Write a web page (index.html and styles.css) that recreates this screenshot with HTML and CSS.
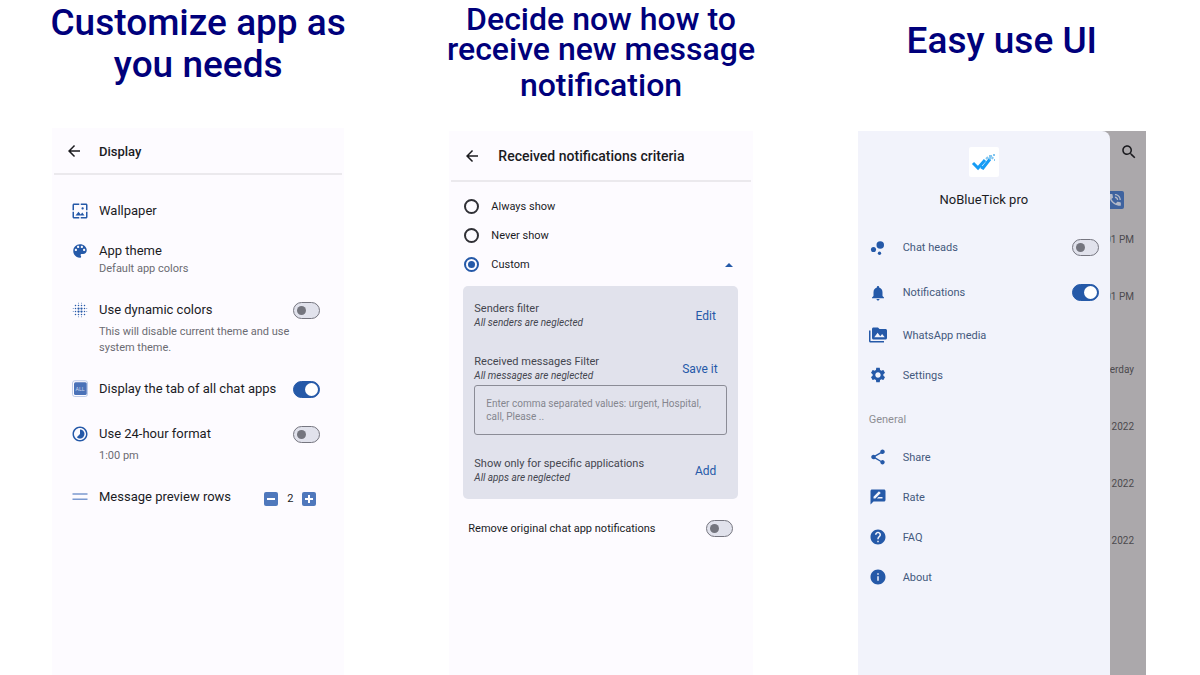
FILE: index.html
```html
<!DOCTYPE html>
<html lang="en">

<head>

<meta charset="utf-8">
<meta name="viewport" content="width=device-width, initial-scale=1">
<title>NoBlueTick pro</title>

<link rel="stylesheet" href="styles.css">

</head>

<body>

<main class="showcase">

   <section class="column">
      <h2 class="headline headline-large">Customize app as<br>you needs</h2>

      <div class="phone">
         <header class="appbar">
            <button class="iconbtn" aria-label="Back">
               <svg class="icon" viewBox="0 0 24 24"><path d="M20 11H7.83l5.59-5.59L12 4l-8 8 8 8 1.41-1.41L7.83 13H20v-2z"/></svg>
            </button>
            <h3 class="apptitle">Display</h3>
         </header>

         <ul class="settings">
            <li class="setting">
               <svg class="icon" viewBox="0 0 24 24"><path d="M4 4h7V2H4c-1.1 0-2 .9-2 2v7h2V4zm6 9l-4 5h12l-3-4-2.03 2.71L10 13zm7-4.5c0-.83-.67-1.5-1.5-1.5S14 7.67 14 8.5s.67 1.5 1.5 1.5S17 9.33 17 8.5zM20 2h-7v2h7v7h2V4c0-1.1-.9-2-2-2zm0 18h-7v2h7c1.1 0 2-.9 2-2v-7h-2v7zM4 13H2v7c0 1.1.9 2 2 2h7v-2H4v-7z"/></svg>
               <span class="name">Wallpaper</span>
            </li>
            <li class="setting">
               <svg class="icon" viewBox="0 0 24 24"><path d="M12 3c-4.97 0-9 4.03-9 9s4.03 9 9 9c.83 0 1.5-.67 1.5-1.5 0-.39-.15-.74-.39-1.01-.23-.26-.38-.61-.38-.99 0-.83.67-1.5 1.5-1.5H16c2.76 0 5-2.24 5-5 0-4.42-4.03-8-9-8zm-5.5 9c-.83 0-1.5-.67-1.5-1.5S5.67 9 6.5 9 8 9.67 8 10.5 7.33 12 6.5 12zm3-4C8.67 8 8 7.33 8 6.5S8.67 5 9.5 5s1.5.67 1.5 1.5S10.33 8 9.5 8zm5 0c-.83 0-1.5-.67-1.5-1.5S13.67 5 14.5 5s1.5.67 1.5 1.5S15.33 8 14.5 8zm3 4c-.83 0-1.5-.67-1.5-1.5S16.67 9 17.5 9s1.5.67 1.5 1.5-.67 1.5-1.5 1.5z"/></svg>
               <span class="name">App theme</span>
               <span class="hint">Default app colors</span>
            </li>
            <li class="setting">
               <svg class="icon" viewBox="0 0 24 24">
                  <g class="dots"><path d="M10 10h0M14 10h0M10 14h0M14 14h0" stroke-width="3"/><path d="M6 10h0M6 14h0M18 10h0M18 14h0M10 6h0M14 6h0M10 18h0M14 18h0M6 6h0M18 6h0M6 18h0M18 18h0" stroke-width="2"/><path d="M10 3h0M14 3h0M10 21h0M14 21h0M3 10h0M3 14h0M21 10h0M21 14h0" stroke-width="1"/></g>
               </svg>
               <label class="name" for="dynamic">Use dynamic colors</label>
               <input class="switch" type="checkbox" id="dynamic">
               <span class="hint spaced">This will disable current theme and use system theme.</span>
            </li>
            <li class="setting loose">
               <svg class="icon" viewBox="0 0 24 24">
                  <rect x="2" y="1" width="20" height="21" rx="3" fill="none" stroke="#a9bce0"/>
                  <rect x="4" y="3" width="17" height="17" rx="2" fill="#4b72b8"/>
                  <text x="12" y="14" text-anchor="middle" class="tiny">ALL</text>
               </svg>
               <label class="name" for="alltab">Display the tab of all chat apps</label>
               <input class="switch" type="checkbox" id="alltab" checked>
            </li>
            <li class="setting">
               <svg class="icon" viewBox="0 0 24 24"><path d="M16.24 7.76C15.07 6.59 13.54 6 12 6v6l-4.24 4.24c2.34 2.34 6.14 2.34 8.49 0 2.34-2.34 2.34-6.14-.01-8.48zM12 2C6.48 2 2 6.48 2 12s4.48 10 10 10 10-4.48 10-10S17.52 2 12 2zm0 18c-4.42 0-8-3.58-8-8s3.58-8 8-8 8 3.58 8 8-3.58 8-8 8z"/></svg>
               <label class="name" for="hours">Use 24-hour format</label>
               <input class="switch" type="checkbox" id="hours">
               <span class="hint spaced">1:00 pm</span>
            </li>
            <li class="setting">
               <svg class="icon" viewBox="0 0 24 24"><path fill="#7b99d0" d="M2 7h20v2H2zM2 14h20v2H2z"/></svg>
               <span class="name">Message preview rows</span>
               <span class="stepper">
                  <button class="step" aria-label="Fewer rows"><svg viewBox="0 0 14 14"><path d="M3 7h8"/></svg></button>
                  <output>2</output>
                  <button class="step" aria-label="More rows"><svg viewBox="0 0 14 14"><path d="M3 7h8M7 3v8"/></svg></button>
               </span>
            </li>
         </ul>
      </div>
   </section>

   <section class="column">
      <h2 class="headline headline-tight">Decide now how to<br>receive new message<span class="lastline">notification</span></h2>

      <div class="phone">
         <header class="appbar appbar-tall">
            <button class="iconbtn" aria-label="Back">
               <svg class="icon" viewBox="0 0 24 24"><path d="M20 11H7.83l5.59-5.59L12 4l-8 8 8 8 1.41-1.41L7.83 13H20v-2z"/></svg>
            </button>
            <h3 class="apptitle">Received notifications criteria</h3>
         </header>

         <div class="choices">
            <label class="choice"><input class="radio" type="radio" name="criteria">Always show</label>
            <label class="choice"><input class="radio" type="radio" name="criteria">Never show</label>
            <label class="choice"><input class="radio" type="radio" name="criteria" checked>Custom
               <svg class="caret" viewBox="0 0 8 4"><path d="M0 4l4-4 4 4z"/></svg>
            </label>
         </div>

         <div class="filters">
            <div class="filter">
               <div>
                  <p class="filtername">Senders filter</p>
                  <p class="state">All senders are neglected</p>
               </div>
               <button class="action">Edit</button>
            </div>
            <div class="filter filter-input">
               <div>
                  <label class="filtername" for="words">Received messages Filter</label>
                  <p class="state">All messages are neglected</p>
               </div>
               <button class="action">Save it</button>
            </div>
            <textarea class="words" id="words" rows="2" placeholder="Enter comma separated values: urgent, Hospital, call, Please .."></textarea>
            <div class="filter">
               <div>
                  <p class="filtername">Show only for specific applications</p>
                  <p class="state">All apps are neglected</p>
               </div>
               <button class="action">Add</button>
            </div>
         </div>

         <div class="remove">
            <label for="remove">Remove original chat app notifications</label>
            <input class="switch" type="checkbox" id="remove">
         </div>
      </div>
   </section>

   <section class="column">
      <h2 class="headline headline-single">Easy use UI</h2>

      <div class="phone phone-drawer">
         <nav class="drawer">
            <svg class="logo" viewBox="0 0 30 30">
               <rect width="30" height="30" rx="2" fill="#fff"/>
               <path d="M4 16l5 5 7-8M12 20l2 1 7-9" fill="none" stroke="#169cf5" stroke-width="3"/>
               <path d="M17 12l2-2M20 12l2-2M20 9h3M23 12l1-2M24 8h2M25 13h1" fill="none" stroke="#82c6f0" stroke-width="2"/>
            </svg>
            <h3 class="product">NoBlueTick pro</h3>

            <div class="item item-switch">
               <svg class="icon" viewBox="0 0 24 24"><circle cx="6" cy="14" r="3.4"/><circle cx="14" cy="19" r="2.2"/><circle cx="15" cy="8" r="5"/></svg>
               <label for="heads">Chat heads</label>
               <input class="switch" type="checkbox" id="heads">
            </div>
            <div class="item item-switch">
               <svg class="icon" viewBox="0 0 24 24"><path d="M12 22c1.1 0 2-.9 2-2h-4c0 1.1.89 2 2 2zm6-6v-5c0-3.07-1.64-5.64-4.5-6.32V4c0-.83-.67-1.5-1.5-1.5s-1.5.67-1.5 1.5v.68C7.63 5.36 6 7.92 6 11v5l-2 2v1h16v-1l-2-2z"/></svg>
               <label for="notify">Notifications</label>
               <input class="switch" type="checkbox" id="notify" checked>
            </div>
            <a class="item" href="#media">
               <svg class="icon" viewBox="0 0 24 24"><path d="M2 6H0v5h.01L0 20c0 1.1.9 2 2 2h18v-2H2V6zm20-2h-8l-2-2H6c-1.1 0-1.99.9-1.99 2L4 16c0 1.1.9 2 2 2h16c1.1 0 2-.9 2-2V6c0-1.1-.9-2-2-2zM7 15l4.5-6 3.5 4.51 2.5-3.01L21 15H7z"/></svg>
               WhatsApp media
            </a>
            <a class="item" href="#settings">
               <svg class="icon" viewBox="0 0 24 24"><path d="M19.14 12.94c.04-.3.06-.61.06-.94 0-.32-.02-.64-.07-.94l2.03-1.58c.18-.14.23-.41.12-.61l-1.92-3.32c-.12-.22-.37-.29-.59-.22l-2.39.96c-.5-.38-1.03-.7-1.62-.94l-.36-2.54c-.04-.24-.24-.41-.48-.41h-3.84c-.24 0-.43.17-.47.41l-.36 2.54c-.59.24-1.13.57-1.62.94l-2.39-.96c-.22-.08-.47 0-.59.22L2.74 8.87c-.12.21-.08.47.12.61l2.03 1.58c-.05.3-.09.63-.09.94s.02.64.07.94l-2.03 1.58c-.18.14-.23.41-.12.61l1.92 3.32c.12.22.37.29.59.22l2.39-.96c.5.38 1.03.7 1.62.94l.36 2.54c.05.24.24.41.48.41h3.84c.24 0 .44-.17.47-.41l.36-2.54c.59-.24 1.13-.56 1.62-.94l2.39.96c.22.08.47 0 .59-.22l1.92-3.32c.12-.22.07-.47-.12-.61l-2.01-1.58zM12 15.6c-1.98 0-3.6-1.62-3.6-3.6s1.62-3.6 3.6-3.6 3.6 1.62 3.6 3.6-1.62 3.6-3.6 3.6z"/></svg>
               Settings
            </a>
            <h4 class="group">General</h4>
            <a class="item" href="#share">
               <svg class="icon" viewBox="0 0 24 24"><path d="M18 16.08c-.76 0-1.44.3-1.96.77L8.91 12.7c.05-.23.09-.46.09-.7s-.04-.47-.09-.7l7.05-4.11c.54.5 1.25.81 2.04.81 1.66 0 3-1.34 3-3s-1.34-3-3-3-3 1.34-3 3c0 .24.04.47.09.7L8.04 9.81C7.5 9.31 6.79 9 6 9c-1.66 0-3 1.34-3 3s1.34 3 3 3c.79 0 1.5-.31 2.04-.81l7.12 4.16c-.05.21-.08.43-.08.65 0 1.61 1.31 2.92 2.92 2.92 1.61 0 2.92-1.31 2.92-2.92s-1.31-2.92-2.92-2.92z"/></svg>
               Share
            </a>
            <a class="item" href="#rate">
               <svg class="icon" viewBox="0 0 24 24"><path d="M20 2H4c-1.1 0-1.99.9-1.99 2L2 22l4-4h14c1.1 0 2-.9 2-2V4c0-1.1-.9-2-2-2zM6 14v-2.47l6.88-6.88c.2-.2.51-.2.71 0l1.77 1.77c.2.2.2.51 0 .71L8.47 14H6zm12 0h-7.5l2-2H18v2z"/></svg>
               Rate
            </a>
            <a class="item" href="#faq">
               <svg class="icon" viewBox="0 0 24 24"><path d="M12 2C6.48 2 2 6.48 2 12s4.48 10 10 10 10-4.48 10-10S17.52 2 12 2zm1 17h-2v-2h2v2zm2.07-7.75l-.9.92C13.45 12.9 13 13.5 13 15h-2v-.5c0-1.1.45-2.1 1.17-2.83l1.24-1.26c.37-.36.59-.86.59-1.41 0-1.1-.9-2-2-2s-2 .9-2 2H8c0-2.21 1.79-4 4-4s4 1.79 4 4c0 .88-.36 1.68-.93 2.25z"/></svg>
               FAQ
            </a>
            <a class="item" href="#about">
               <svg class="icon" viewBox="0 0 24 24"><path d="M12 2C6.48 2 2 6.48 2 12s4.48 10 10 10 10-4.48 10-10S17.52 2 12 2zm1 15h-2v-6h2v6zm0-8h-2V7h2v2z"/></svg>
               About
            </a>
         </nav>

         <div class="behind">
            <button class="iconbtn" aria-label="Search">
               <svg class="icon" viewBox="0 0 24 24"><path d="M15.5 14h-.79l-.28-.27C15.41 12.59 16 11.11 16 9.5 16 5.91 13.09 3 9.5 3S3 5.91 3 9.5 5.91 16 9.5 16c1.61 0 3.09-.59 4.23-1.57l.27.28v.79l5 4.99L20.49 19l-4.99-5zm-6 0C7.01 14 5 11.99 5 9.5S7.01 5 9.5 5 14 7.01 14 9.5 11.99 14 9.5 14z"/></svg>
            </button>
            <svg class="call" viewBox="0 0 18 18">
               <rect width="18" height="18" rx="2" fill="#3f639f"/>
               <path transform="translate(1 1) scale(.66)" fill="#b4b9c8" d="M20 15.5c-1.25 0-2.45-.2-3.57-.57-.35-.11-.74-.03-1.02.24l-2.2 2.2c-2.83-1.44-5.15-3.75-6.59-6.59l2.2-2.21c.28-.26.36-.65.25-1C8.7 6.45 8.5 5.25 8.5 4c0-.55-.45-1-1-1H4c-.55 0-1 .45-1 1 0 9.39 7.61 17 17 17 .55 0 1-.45 1-1v-3.5c0-.55-.45-1-1-1zM19 12h2c0-4.97-4.03-9-9-9v2c3.87 0 7 3.13 7 7zm-4 0h2c0-2.76-2.24-5-5-5v2c1.66 0 3 1.34 3 3z"/>
            </svg>
            <time class="stamp">01 PM</time>
            <time class="stamp">01 PM</time>
            <time class="stamp stamp-older">erday</time>
            <time class="stamp">2022</time>
            <time class="stamp">2022</time>
            <time class="stamp">2022</time>
         </div>
      </div>
   </section>

</main>

</body>

</html>
```
FILE: styles.css
```css
* {
   box-sizing: border-box;
}

body {
   margin: 0px;
   background: white;
   color: #1b1b1f;
   font-family: Roboto, "Liberation Sans", sans-serif;
   font-size: 11px;
}

h2, h3, h4, p, ul {
   margin: 0px;
   padding: 0px;
   font-weight: 400;
}

button {
   margin: 0px;
   padding: 0px;
   border: 0px;
   background: none;
   color: inherit;
   font: inherit;
   cursor: pointer;
}

.showcase {
   display: grid;
   grid-template-columns: 292fr 303fr 288fr;
   gap: 105px;
   min-height: 100vh;
   padding: 0px 54px 0px 52px;
}

.column {
   display: flex;
   flex-direction: column;
   min-width: 0px;
}

/* headlines */

.headline {
   display: flow-root;
   margin: 0px -10px;
   color: #00007b;
   font-weight: 500;
   text-align: center;
   white-space: nowrap;
}

.headline-large {
   height: 128px;
   padding-top: 2px;
   font-size: 37px;
   line-height: 42px;
}

.headline-tight {
   height: 131px;
   padding-top: 4px;
   font-size: 32px;
   line-height: 30px;
}

.lastline {
   display: block;
   margin-top: 6px;
}

.headline-single {
   height: 131px;
   padding-top: 20px;
   font-size: 37px;
   line-height: 42px;
}

/* shared parts */

.phone {
   flex: 1;
   background: #fdfbff;
}

.icon {
   display: block;
   width: 18px;
   height: 18px;
   flex: none;
   fill: #2559a8;
}

.iconbtn .icon {
   fill: #1b1b1f;
}

.appbar {
   display: flex;
   align-items: center;
   gap: 16px;
   height: 47px;
   margin: 0px 2px;
   padding-top: 1px;
   padding-left: 11px;
   border-bottom: 2px solid #ebe9ed;
}

.appbar-tall {
   height: 51px;
   gap: 17px;
   padding-left: 12px;
}

.apptitle {
   font-size: 13px;
   font-weight: 500;
}

.appbar-tall .apptitle {
   font-size: 14px;
}

.switch {
   display: flex;
   align-items: center;
   appearance: none;
   flex: none;
   width: 27px;
   height: 17px;
   margin: 0px;
   padding: 0px 3px;
   border: 1px solid #767680;
   border-radius: 9px;
   background: #e1e2ec;
}

.switch::before {
   content: "";
   width: 9px;
   height: 9px;
   border-radius: 50%;
   background: #74757e;
}

.switch:checked {
   justify-content: flex-end;
   padding: 0px 1px;
   border-color: #2559a8;
   background: #2559a8;
}

.switch:checked::before {
   width: 13px;
   height: 13px;
   background: white;
}

/* display settings */

.settings {
   padding: 26px 24px 0px 19px;
   list-style: none;
}

.setting {
   display: grid;
   grid-template-columns: 18px 1fr auto;
   column-gap: 10px;
   align-items: center;
   margin-bottom: 20px;
}

.setting.loose {
   margin-bottom: 25px;
}

.name {
   font-size: 13px;
   line-height: 20px;
   white-space: nowrap;
}

.hint {
   grid-column: 2 / 4;
   margin-bottom: 3px;
   color: #6b6b72;
   font-size: 11px;
   line-height: 16px;
}

.spaced {
   margin-top: 4px;
   padding-right: 20px;
}

.dots {
   stroke: #2559a8;
   stroke-linecap: round;
}

.tiny {
   fill: #c9d6ee;
   font-size: 7px;
}

.stepper {
   display: flex;
   align-items: center;
   gap: 9px;
   margin-right: 4px;
   padding-top: 3px;
}

.step {
   width: 14px;
   height: 14px;
   border-radius: 2px;
   background: #4f78bc;
}

.step svg {
   display: block;
   stroke: white;
   stroke-width: 2;
}

/* notification criteria */

.choices {
   padding: 10px 20px 0px 15px;
}

.choice {
   display: flex;
   align-items: center;
   gap: 12px;
   height: 29px;
}

.radio {
   display: grid;
   place-items: center;
   appearance: none;
   width: 15px;
   height: 15px;
   margin: 0px;
   border: 2px solid #303036;
   border-radius: 50%;
}

.radio:checked {
   border-color: #2559a8;
}

.radio:checked::before {
   content: "";
   width: 7px;
   height: 7px;
   border-radius: 50%;
   background: #2559a8;
}

.caret {
   width: 8px;
   height: 4px;
   margin-left: auto;
   fill: #2559a8;
}

.filters {
   margin: 7px 15px 0px 14px;
   padding: 16px 11px 14px 11px;
   border-radius: 5px;
   background: #e1e2ec;
   color: #44464f;
}

.filter {
   display: flex;
   justify-content: space-between;
   align-items: center;
   height: 28px;
}

.filter-input {
   margin-top: 25px;
}

.filtername {
   display: block;
   line-height: 14px;
}

.state {
   font-size: 10px;
   font-style: italic;
   line-height: 14px;
}

.action {
   min-width: 24px;
   margin-right: 9px;
   color: #2559a8;
   font-size: 12px;
}

.words {
   display: block;
   width: 100%;
   height: 50px;
   margin: 2px 0px 22px 0px;
   padding: 11px;
   border: 1px solid #8b8c96;
   border-radius: 3px;
   background: none;
   font-family: inherit;
   font-size: 10px;
   line-height: 13px;
   resize: none;
}

.words::placeholder {
   color: #85868f;
}

.remove {
   display: flex;
   justify-content: space-between;
   align-items: center;
   margin: 21px 20px 0px 19px;
}

/* drawer */

.phone-drawer {
   display: flex;
   background: #aba8ab;
}

.drawer {
   flex: 0 0 87.5%;
   padding: 16px 11px 0px 11px;
   border-top-right-radius: 8px;
   background: #f2f3fb;
}

.logo {
   display: block;
   width: 30px;
   height: 30px;
   margin: 0px auto;
}

.product {
   margin: 13px 0px 15px 0px;
   font-size: 13px;
   line-height: 20px;
   text-align: center;
}

.item {
   display: flex;
   align-items: center;
   gap: 16px;
   height: 40px;
   color: #44597d;
   font-size: 11px;
   text-decoration: none;
}

.item-switch {
   height: 45px;
}

.item .switch {
   margin-left: auto;
}

.group {
   margin: 16px 0px 8px 0px;
   color: #8e8e94;
   font-size: 11px;
   line-height: 18px;
}

.behind {
   display: flex;
   flex: 1;
   flex-direction: column;
   align-items: flex-end;
   min-width: 0px;
   padding: 12px 12px 0px 0px;
   overflow: hidden;
}

.behind .iconbtn {
   margin-right: -4px;
}

.call {
   width: 18px;
   height: 18px;
   margin: 30px 10px 23px 0px;
}

.stamp {
   margin-bottom: 41px;
   color: #4c4a4e;
   font-size: 10px;
   line-height: 16px;
   white-space: nowrap;
}

.stamp-older {
   margin-top: 16px;
}
```
